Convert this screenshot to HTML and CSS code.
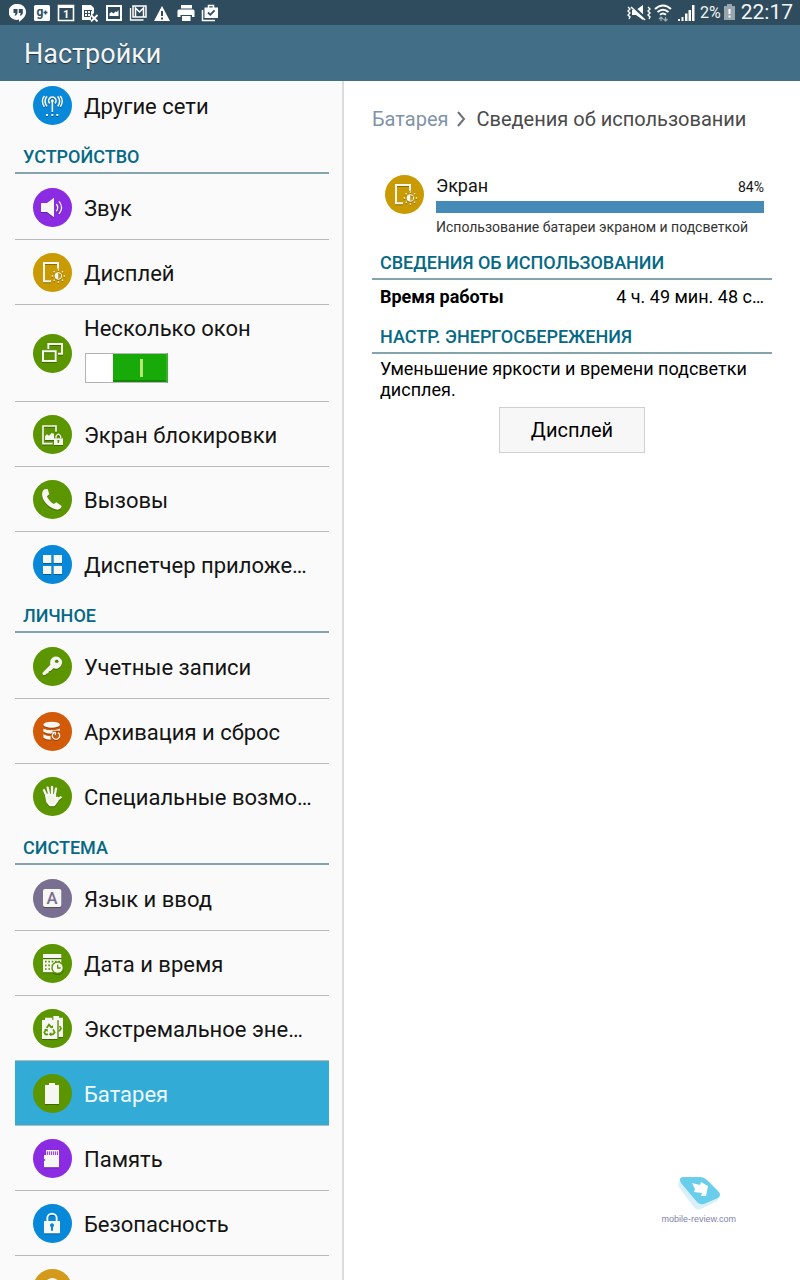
FILE: index.html
```html
<!DOCTYPE html>
<html lang="ru">
  <head>
    <meta charset="UTF-8" />
    <meta name="viewport" content="width=device-width, initial-scale=1.0" />
    <title>Настройки</title>
    <link rel="stylesheet" href="styles.css">
  </head>
  <body>
    <!-- Status bar -->
    <div class="status-bar">
      <div class="notifications">
        <svg viewBox="0 0 18 18"><path fill="#fff" d="M9 0a8 8 0 0 1 8 8c0 4-3 7-7 10v-2.500A8 8 0 1 1 9 0z"/><path fill="#2f4c5e" d="M4.500 5h4v4.500L7 11.500H5.500L6.500 9h-2zM9.800 5h4v4.500l-1.500 2h-1.500l1-2.500h-2z"/></svg>
        <svg viewBox="0 0 18 18"><rect x="1" y="1" width="16" height="16" rx="1.500" fill="#fff"/><text x="3.500" y="12" class="glyph-text" font-size="12">g</text><path stroke="#2f4c5e" stroke-width="1.500" d="M10.500 8.500h4M12.500 6.500v4"/></svg>
        <svg viewBox="0 0 18 18"><path fill="none" stroke="#fff" stroke-width="1.600" d="M1.500 1.500h15v15h-15z"/><path fill="#fff" d="M1 1h16v3H1z"/><text x="6" y="14" fill="#fff" font-size="11" font-weight="700">1</text></svg>
        <svg viewBox="0 0 18 18"><path fill="#fff" d="M1 1h9l3 3v5l-3 3v4H1z"/><path fill="none" stroke="#2f4c5e" d="M3 6.500h8M3 9.500h7M3 12.500h6M3.500 6v7M6.500 6v7M9.500 6v6"/><path stroke="#fff" stroke-width="1.800" d="M10 11l6.500 6.500M16.500 11L10 17.500"/></svg>
        <svg viewBox="0 0 18 18"><path fill="none" stroke="#fff" stroke-width="2" d="M2 2h14v14H2z"/><path fill="#fff" d="M4.500 12V9.500l2-1.500 2 1.500 2-2 1.500.500 1.500-2v6z"/></svg>
        <svg viewBox="0 0 18 18"><path fill="none" stroke="#fff" stroke-width="1.300" d="M1.500 4v12h13"/><path fill="none" stroke="#fff" stroke-width="1.500" d="M4 2h13v11H4zM6.500 13V4l4 4 4-4v9"/></svg>
        <svg viewBox="0 0 18 18"><path fill="#fff" d="M9 2l8 15H1z"/><path stroke="#2f4c5e" stroke-width="2" d="M9 7v5M9 13.500v2"/></svg>
        <svg viewBox="0 0 18 18"><path fill="#fff" d="M4 1h11v3.500H4zM2 5.500h14a1.500 1.500 0 0 1 1.500 1.500v6H15v-2H3.500v2H.500V7A1.500 1.500 0 0 1 2 5.500zM5 12h8.500v5H5z"/></svg>
        <svg viewBox="0 0 18 18"><path fill="none" stroke="#fff" stroke-width="1.500" d="M1.500 6v10.500H14M7.500 4V1.500h5V4"/><path fill="#fff" d="M3.500 3.500H17V14H3.500z"/><path fill="none" stroke="#2f4c5e" stroke-width="1.800" d="M7 8.500l2.300 2.300 4.200-4.500"/></svg>
      </div>
      <div class="indicators">
        <svg width="24" height="18" viewBox="0 0 24 18"><path fill="#fff" d="M5 6h4l7-5v15l-7-5H5z"/><path stroke="#2f4c5e" stroke-width="3" d="M5 2l14 13"/><path stroke="#fff" stroke-width="1.600" d="M4 3l14 13"/><path fill="none" stroke="#fff" stroke-width="1.400" d="M1 3l2 2-2 2 2 2-2 2 2 2-1 2M21 3l2 2-2 2 2 2-2 2 2 2-1 2"/></svg>
        <svg width="18" height="18" viewBox="0 0 18 18"><path fill="none" stroke="#fff" stroke-width="2" d="M1 5q8-7 16 0M3.500 8q5.500-4.500 11 0M6 10.800q3-2.500 6 0"/><path fill="none" stroke="#9db0ba" stroke-width="1.200" d="M7 17v-4M5 15l2-2 2 2M11.500 13v4M9.500 15l2 2 2-2"/></svg>
        <svg class="signal" width="18" height="18" viewBox="0 0 18 18"><path fill="#fff" d="M1 15h2v2H1zM4.500 13h2v4h-2zM8 9.500h2.500V17H8zM11.500 6H14v11h-2.500zM15 1h2.500v16H15z"/></svg>
        <span class="charge">2%</span>
        <svg width="11" height="18" viewBox="0 0 11 18"><path fill="#96a5ae" d="M3 0h5v2h3v14H0V2h3z"/><path stroke="#fff" stroke-width="2" d="M5.500 5v5M5.500 11.500v2"/></svg>
        <span class="clock">22:17</span>
      </div>
    </div>

    <header class="header">
      <h1>Настройки</h1>
    </header>

    <div class="panes">
      <!-- Settings list -->
      <nav class="sidebar">
        <div class="list">
          <a href="#" class="item item-last">
            <svg class="icon blue" viewBox="0 0 117 117"><g fill="none" stroke-width="5"><path d="M58 44v34M50 52a11 11 0 1 1 16 0M42 61a22 22 0 0 1 0-30M74 61a22 22 0 0 0 0-30M34 62a26 26 0 0 1 0-32M82 62a26 26 0 0 0 0-32"/><circle cx="58" cy="44" r="2"/><path stroke-width="6" d="M39 87h6M55 87h6M70 87h6"/></g></svg>
            <span class="name">Другие сети</span>
          </a>

          <h2 class="section-title">Устройство</h2>
          <a href="#" class="item">
            <svg class="icon violet" viewBox="0 0 117 117"><g><path stroke="none" d="M24 45h18l21-16v59L42 72H24z"/><path fill="none" stroke-width="4" d="M70 48q8 11 0 22M78 40q15 19 0 38"/></g></svg>
            <span class="name">Звук</span>
          </a>
          <a href="#" class="item">
            <svg class="icon gold" viewBox="0 0 117 117"><g id="display"><path fill="none" stroke-width="6" d="M54 85H33V30h42v17"/><circle cx="76" cy="69" r="10" fill="none" stroke-width="3"/><path stroke="none" d="M76 59a10 10 0 0 0 0 20z"/><path stroke-width="4" d="M76 49v4M76 85v4M56 69h4M92 69h4M62 55l3 3M87 80l3 3M62 83l3-3M87 58l3-3"/></g></svg>
            <span class="name">Дисплей</span>
          </a>
          <label class="item item-tall">
            <svg class="icon green" viewBox="0 0 117 117"><g fill="none" stroke-width="6"><path d="M46 46V30h41v29H75"/><path d="M30 52h38v29H30z"/></g></svg>
            <span class="switch-column">
              <span class="name">Несколько окон</span>
              <input type="checkbox" class="switch" checked />
            </span>
          </label>
          <a href="#" class="item">
            <svg class="icon green" viewBox="0 0 117 117"><g><path fill="none" stroke-width="5" d="M59 86H30V33h39v17"/><path stroke="none" d="M36 75V64l6-6 6 4 8-8 7 2v19z"/><path stroke="none" d="M63 70h27v20H63z"/><path fill="none" stroke-width="4" d="M69 70v-6q7-13 14 0v6"/><path stroke="#5b9500" stroke-width="4" d="M76 76v8M73 77h6"/></g></svg>
            <span class="name">Экран блокировки</span>
          </a>
          <a href="#" class="item">
            <svg class="icon green" viewBox="0 0 117 117"><g stroke="none"><path d="M35 28l9-1 5 16-7 6c3 9 11 18 20 23l8-5 16 11c-1 7-5 10-12 11C50 87 22 59 28 37q2-7 7-9z"/></g></svg>
            <span class="name">Вызовы</span>
          </a>
          <a href="#" class="item item-last">
            <svg class="icon blue" viewBox="0 0 117 117"><g stroke="none"><path d="M30 30h25v24H30zM62 30h25v24H62zM30 63h25v24H30zM62 63h25v24H62z"/></g></svg>
            <span class="name">Диспетчер приложе…</span>
          </a>

          <h2 class="section-title">Личное</h2>
          <a href="#" class="item">
            <svg class="icon green" viewBox="0 0 117 117"><g stroke="none"><path fill-rule="evenodd" d="M58 32q9-6 20-1 11 8 9 18-3 13-14 16-7 1-12-1l-8 8-5 1-2 6-6 1-3 4-7 1-2-7 24-25q-3-14 6-21zm12 6q-6 2-4 8 6 5 11-1 0-7-7-7z"/></g></svg>
            <span class="name">Учетные записи</span>
          </a>
          <a href="#" class="item">
            <svg class="icon orange" viewBox="0 0 117 117"><g stroke="none"><ellipse cx="56" cy="38" rx="25" ry="9"/><path d="M31 50q25 9 50 0v6H60l-5 9q-16 0-24-6zM31 67q10 6 22 6v10q-15 0-22-6z"/><path fill="none" stroke="#fff3ec" stroke-width="4" d="M63 62a11 11 0 1 0 12 0M58 61h9v9"/></g></svg>
            <span class="name">Архивация и сброс</span>
          </a>
          <a href="#" class="item item-last">
            <svg class="icon green" viewBox="0 0 117 117"><g stroke-width="7" stroke-linecap="round" stroke-linejoin="round" fill="none"><path d="M42 60L33 40M49 55l-5-23M57 54V30M65 56l4-21M72 69l11-8"/><path fill="#eef5e4" d="M40 58l3 16 8 10h12l10-13 1-8-8 1V55l-22-2z"/></g></svg>
            <span class="name">Специальные возмо…</span>
          </a>

          <h2 class="section-title">Система</h2>
          <a href="#" class="item">
            <svg class="icon mauve" viewBox="0 0 117 117"><g stroke="none"><rect x="30" y="30" width="55" height="54" rx="6"/></g><text x="57" y="75" font-size="50" font-weight="500" text-anchor="middle" fill="#796f90">A</text></svg>
            <span class="name">Язык и ввод</span>
          </a>
          <a href="#" class="item">
            <svg class="icon green" viewBox="0 0 117 117"><g stroke="none"><path d="M30 30h55v12H30zM30 46h55v39H30z"/><path fill="none" stroke="#5b9500" stroke-width="5" stroke-dasharray="5 5" d="M36 53h46M36 64h34M36 75h24"/><circle cx="74" cy="71" r="19" fill="#5b9500"/><circle cx="74" cy="71" r="15"/><path fill="none" stroke="#5b9500" stroke-width="4" d="M74 62v10h9"/></g></svg>
            <span class="name">Дата и время</span>
          </a>
          <a href="#" class="item">
            <svg class="icon green" viewBox="0 0 117 117"><g stroke="none"><path d="M61 21h17v5h12v58H77V34H61z"/><path d="M27 33h9v-7h22v7h15v57H27z"/><path fill="none" stroke="#5b9500" stroke-width="5" d="M41 57l7-10 8 9M60 61l5 9-5 6h-8M45 76h-8l-3-6 5-8M80 51l4 8-6 8"/><path fill="#5b9500" d="M51 57h9v-9zM55 69v13l-8-6zM33 60h11v9z"/></g></svg>
            <span class="name">Экстремальное эне…</span>
          </a>
          <a href="#" class="item item-active" aria-current="page">
            <svg class="icon green" viewBox="0 0 117 117"><g stroke="none"><path d="M36 33h12v-6h18v6h12v57H36z"/></g></svg>
            <span class="name">Батарея</span>
          </a>
          <a href="#" class="item">
            <svg class="icon violet" viewBox="0 0 117 117"><g stroke="none"><path d="M39 33h39v52H33V66l5-3-5-3V48h6z"/><path fill="none" stroke="#8b2be2" stroke-width="3" d="M43 37v11M49 37v11M55 37v11M61 37v11M67 37v11M73 37v11"/></g></svg>
            <span class="name">Память</span>
          </a>
          <a href="#" class="item">
            <svg class="icon blue" viewBox="0 0 117 117"><g stroke="none"><path d="M33 51h48v37H33z"/><path fill="none" stroke="#eef7fd" stroke-width="6" d="M43 51V42a14 13 0 0 1 28 0v9"/><circle cx="57" cy="64" r="6" fill="#0788d8"/><path fill="#0788d8" d="M54 64h6v16h-6z"/></g></svg>
            <span class="name">Безопасность</span>
          </a>
          <a href="#" class="item" aria-label="Справка">
            <svg class="icon amber" viewBox="0 0 117 117"><g fill="none" stroke-width="9"><path d="M42 44a16 13 0 1 1 24 12q-8 4-8 14M58 77v10"/></g></svg>
          </a>
        </div>
      </nav>

      <!-- Battery usage details -->
      <main class="details">
        <div class="breadcrumb">
          <a href="#">Батарея</a>
          <svg width="10" height="16" viewBox="0 0 10 16"><path fill="none" stroke="#69727a" stroke-width="2" d="M1 1l6 7-6 7"/></svg>
          <span>Сведения об использовании</span>
        </div>

        <div class="usage">
          <svg class="icon gold" viewBox="0 0 117 117"><use href="#display"/></svg>
          <div class="usage-body">
            <div class="usage-head">
              <span class="usage-name">Экран</span>
              <span class="usage-percent">84%</span>
            </div>
            <div class="usage-bar"></div>
            <p class="usage-note">Использование батареи экраном и подсветкой</p>
          </div>
        </div>

        <h2 class="section-title">Сведения об использовании</h2>
        <div class="detail-row">
          <strong>Время работы</strong>
          <span>4 ч. 49 мин. 48 с…</span>
        </div>

        <h2 class="section-title">Настр. энергосбережения</h2>
        <p class="hint">Уменьшение яркости и времени подсветки дисплея.</p>
        <button type="button" class="button">Дисплей</button>

        <div class="brand">
          <svg width="44" height="36" viewBox="0 0 44 36"><path fill="#d9effa" d="M2 4L1 9l15 20q3 5 8 3l16-8 3-8z"/><path fill="#69cdec" d="M6 0h17q4 0 7 3l11 11q4 4 0 7l-14 6q-4 1-7-2L4 6Q1 1 6 0z"/><path fill="#fff" d="M15 6l8 2 1-3 7 4-2 10-5 0 1-3-8-1 1-3z"/></svg>
          <span>mobile-review.com</span>
        </div>
      </main>
    </div>
  </body>
</html>
```
FILE: styles.css
```css
* {
  box-sizing: border-box;
}
body {
  display: flex;
  flex-direction: column;
  height: 100vh;
  margin: 0;
  overflow: hidden;
  background-color: #fff;
  color: #141414;
  font-family: Roboto, 'Noto Sans', sans-serif;
}
h1,
h2,
p {
  margin: 0;
}
a {
  color: inherit;
  text-decoration: none;
}
svg {
  flex: none;
}

/* Status bar */
.status-bar {
  display: flex;
  flex: none;
  justify-content: space-between;
  align-items: center;
  height: 25px;
  padding: 0 7px 0 9px;
  background-color: #2f4c5e;
  color: #f2f5f7;
}
.notifications {
  display: flex;
  gap: 6px;
}
.notifications svg {
  width: 18px;
  height: 18px;
}
.glyph-text {
  fill: #2f4c5e;
  font-weight: 700;
}
.indicators {
  display: flex;
  align-items: center;
  gap: 3px;
}
.signal {
  margin: 0 2px;
}
.charge {
  font-size: 16px;
}
.clock {
  margin-left: 3px;
  font-size: 21px;
  line-height: 25px;
}

/* Title */
.header {
  flex: none;
  height: 56px;
  padding: 0 24px;
  background-color: #426e87;
}
.header h1 {
  color: #f5f5f5;
  font-size: 27px;
  font-weight: 400;
  line-height: 58px;
  text-shadow: 0 1px 1px #1c3442;
}

.panes {
  display: flex;
  flex: 1;
  min-height: 0;
}

/* Settings list */
.sidebar {
  flex: none;
  width: 43%;
  padding: 0 13px 0 15px;
  overflow: hidden;
  background-color: #fafafa;
  border-right: 2px solid #dcdcdc;
}
.list {
  margin-top: -8px;
}
.item {
  display: flex;
  align-items: center;
  gap: 12px;
  height: 65px;
  padding: 0 8px 0 18px;
  border-bottom: 1px solid #b9b9b9;
}
.item-last {
  border-bottom-color: transparent;
}
.item-active {
  background-color: #33abd7;
  color: #eef8fc;
}
.item-tall {
  height: 97px;
}
.name {
  padding-top: 4px;
  overflow: hidden;
  font-size: 22px;
  line-height: 28px;
  text-overflow: ellipsis;
  white-space: nowrap;
}
.section-title {
  height: 36px;
  margin-bottom: 1px;
  padding: 0 8px;
  border-bottom: 2px solid #84a3ad;
  color: #056985;
  font-size: 18px;
  font-weight: 500;
  line-height: 37px;
  text-transform: uppercase;
}

.icon {
  width: 39px;
  height: 39px;
  border-radius: 50%;
}
.icon g {
  fill: #f6f6f2;
  stroke: #f6f6f2;
  filter: drop-shadow(0 3px 0 rgba(0, 0, 0, 0.3));
}
.icon g[fill='none'] {
  fill: none;
}
.icon g[stroke='none'] {
  stroke: none;
}
.blue {
  background-color: #0788d8;
}
.violet {
  background-color: #8b2be2;
}
.gold {
  background-color: #c99a02;
}
.green {
  background-color: #5b9500;
}
.orange {
  background-color: #d35a08;
}
.mauve {
  background-color: #796f90;
}
.amber {
  background-color: #d39a1c;
}

.switch-column {
  display: flex;
  flex-direction: column;
  gap: 10px;
  align-self: flex-start;
  padding-top: 6px;
}
.switch {
  width: 83px;
  height: 30px;
  margin: 0 1px;
  appearance: none;
  background: #fff;
  border: 1px solid #b5b5b5;
}
.switch:checked {
  background:
    linear-gradient(#b5e676, #b5e676) 54px 5px / 3px 18px no-repeat,
    linear-gradient(#18aa08, #18aa08) 27px 0 / 53px 26px no-repeat,
    linear-gradient(#128906, #128906) 27px 0 no-repeat,
    #fff;
  border-right: 2px solid #3dad30;
}

/* Battery usage details */
.details {
  display: flex;
  flex: 1;
  flex-direction: column;
  min-width: 0;
  padding: 0 28px;
}
.breadcrumb {
  display: flex;
  align-items: center;
  gap: 9px;
  height: 76px;
  color: #4a4a4a;
  font-size: 20px;
}
.breadcrumb a {
  color: #7f93a8;
}
.usage {
  display: flex;
  gap: 12px;
  padding: 18px 8px 6px 13px;
}
.usage-body {
  flex: 1;
}
.usage-head {
  display: flex;
  justify-content: space-between;
  align-items: baseline;
  line-height: 21px;
}
.usage-name {
  font-size: 18px;
}
.usage-percent {
  font-size: 14px;
}
.usage-bar {
  height: 12px;
  margin-top: 3px;
  background-color: #468ab7;
}
.usage-note {
  margin-top: 4px;
  color: #333;
  font-size: 14px;
  line-height: 21px;
}
.detail-row {
  display: flex;
  justify-content: space-between;
  height: 37px;
  padding: 0 8px;
  color: #000;
  font-size: 18px;
  line-height: 32px;
}
.hint {
  padding: 3px 8px 7px;
  color: #000;
  font-size: 18px;
  line-height: 21px;
}
.button {
  align-self: center;
  width: 146px;
  height: 46px;
  background-color: #f7f7f7;
  border: 1px solid #d0d0d0;
  color: #000;
  font-family: inherit;
  font-size: 20px;
}

.brand {
  display: flex;
  flex-direction: column;
  align-items: center;
  margin: auto 36px 55px 0;
  align-self: flex-end;
  color: #8182aa;
  font-family: 'Liberation Sans Narrow', 'Liberation Sans', sans-serif;
  font-size: 9px;
  line-height: 12px;
}
```
